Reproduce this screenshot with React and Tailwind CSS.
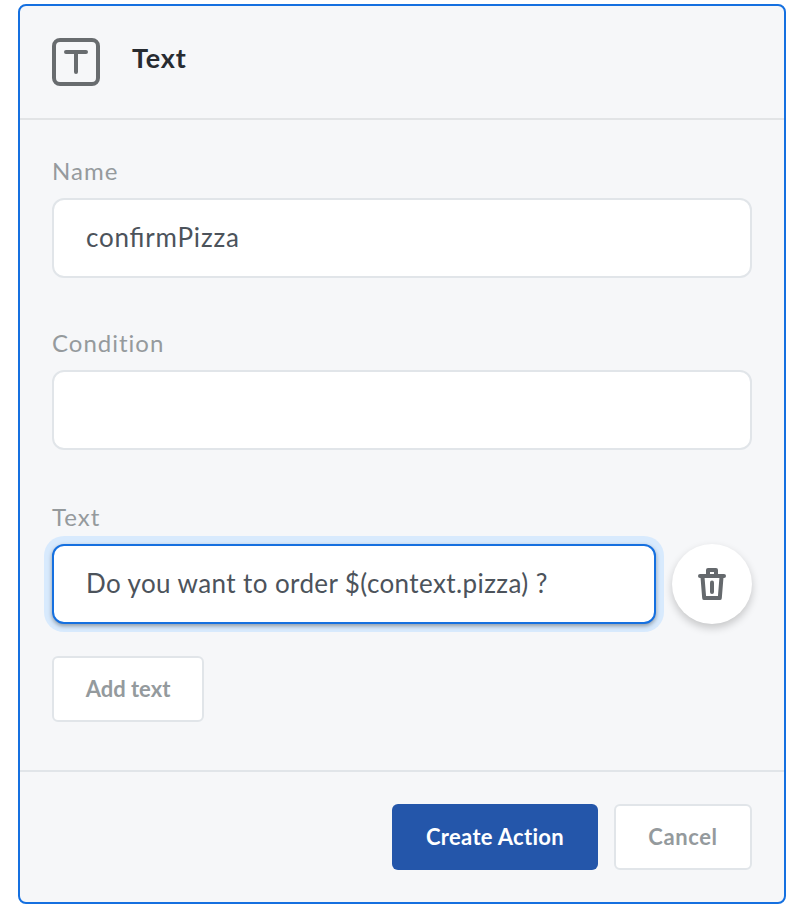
function TextIcon() {
  return (
    <svg width="48" height="48" viewBox="0 0 48 48" fill="none" stroke="#686c6f" strokeWidth="4" strokeLinecap="round" strokeLinejoin="round">
      <rect x="2" y="2" width="44" height="44" rx="6" />
      <path d="M14 14H34M24 14V34" />
    </svg>
  );
}

function TrashIcon() {
  return (
    <svg width="28" height="32" viewBox="0 0 28 32" fill="none" stroke="#65696d" strokeWidth="4" strokeLinecap="round" strokeLinejoin="round">
      <path d="M2 8H26" />
      <path d="M10 7V2H18V7" />
      <path d="M4.5 9L6.2 30H21.8L23.5 9" />
      <path d="M14 14.5V24" />
    </svg>
  );
}

function Label({ children }) {
  return <div className="h-[30px] whitespace-nowrap text-[24px] leading-[30px] tracking-[1px] text-[#959a9d]">{children}</div>;
}

function Field({ value, className }) {
  return (
    <div className={`flex h-20 items-center rounded-[12px] border-2 bg-white px-8 pb-0.5 text-[26px] whitespace-pre text-[#4c535b] ${className}`}>
      {value}
    </div>
  );
}

export default function App() {
  return (
    <div className="h-[916px] w-[798px] bg-white pt-1 pl-[18px] font-['Lato','Noto_Sans',sans-serif]">
      <div className="flex h-[900px] w-[768px] flex-col rounded-lg border-2 border-[#1570e0] bg-[#f6f7f9]">
        <header className="flex h-[114px] shrink-0 items-start border-b-2 border-[#e2e4e6] px-8 pt-8">
          <TextIcon />
          <h1 className="ml-8 pt-1 text-[27px] leading-8 font-bold tracking-[0.8px] text-[#272b31]">Text</h1>
        </header>
        <main className="flex h-[650px] shrink-0 flex-col px-8 pt-9">
          <Label>Name</Label>
          <Field
            value="confirmPizza"
            className="mt-3 border-[#e1e5e9] tracking-[0.8px] [font-feature-settings:'liga'_1]"
          />
          <div className="mt-[50px]">
            <Label>Condition</Label>
          </div>
          <Field value="" className="mt-3 border-[#e1e5e9]" />
          <div className="mt-[52px]">
            <Label>Text</Label>
          </div>
          <div className="mt-3 flex gap-4">
            <Field
              value="Do you want to order $(context.pizza) ?"
              className="w-[604px] border-[#1570e0] tracking-[0.4px] shadow-[0_2px_4px_rgba(0,0,0,0.35),0_0_0_8px_#d8eafd]"
            />
            <button className="flex size-20 items-center justify-center rounded-full bg-white shadow-[0_4px_8px_rgba(0,0,0,0.2)]">
              <TrashIcon />
            </button>
          </div>
          <button className="mt-8 h-[66px] w-[152px] rounded-md border-2 border-[#e1e5e9] bg-white pb-0.5 text-[22px] font-bold whitespace-nowrap text-[#949a9d]">
            Add text
          </button>
        </main>
        <footer className="flex flex-1 items-start justify-end gap-4 border-t-2 border-[#e1e5e9] px-8 pt-8">
          <button className="h-[66px] w-[206px] rounded-md bg-[#2456aa] pb-0.5 text-[22px] font-bold tracking-[0.3px] whitespace-nowrap text-white">Create Action</button>
          <button className="h-[66px] w-[138px] rounded-md border-2 border-[#e1e5e9] bg-white pb-0.5 text-[22px] font-bold tracking-[0.6px] whitespace-nowrap text-[#949a9d]">
            Cancel
          </button>
        </footer>
      </div>
    </div>
  );
}
